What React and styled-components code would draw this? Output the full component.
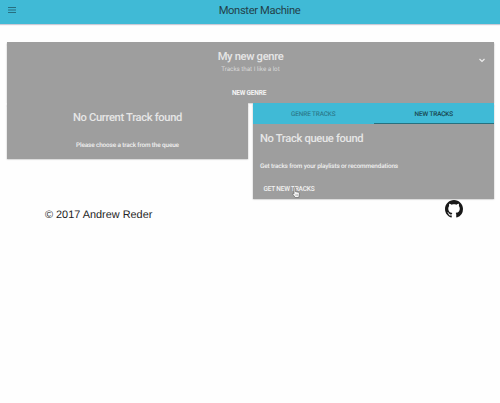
import React from 'react';
import styled, { createGlobalStyle } from 'styled-components';

const GlobalStyle = createGlobalStyle`
  * { box-sizing: border-box; }
  body {
    margin: 0;
    background: #fefefe;
    font-family: Roboto, "Liberation Sans", sans-serif;
    text-rendering: geometricPrecision;
    overflow: hidden;
  }
`;

const Page = styled.div`
  width: 500px;
  height: 403px;
`;

const AppBar = styled.header`
  display: grid;
  grid-template-columns: 24px 1fr 24px;
  height: 24px;
  background: #40bad6;
  box-shadow: 0 1px 1px rgba(70, 70, 110, 0.28);
`;

const MenuIcon = styled.svg`
  width: 8px;
  height: 6px;
  margin: 7px 0 0 8px;
`;

const AppTitle = styled.h1`
  margin: 0 0 0 19px;
  justify-self: center;
  font-size: 11.2px;
  font-weight: 400;
  line-height: 21px;
  letter-spacing: -0.35px;
  color: #23424b;
  white-space: nowrap;
`;

const Main = styled.main`
  padding: 18px 6px 0 7px;
`;

const Card = styled.section`
  background: #9e9e9e;
  color: #e9e9e9;
  box-shadow: 0 0.5px 1.5px rgba(0, 0, 0, 0.35);
`;

const GenreCard = styled(Card)`
  position: relative;
  display: flex;
  flex-direction: column;
  align-items: center;
  height: 61px;
  padding-top: 8px;
`;

const Heading = styled.h2`
  margin: 0;
  font-size: 11.2px;
  font-weight: 500;
  line-height: 14px;
  letter-spacing: -0.34px;
  color: #e6e6e6;
  white-space: nowrap;
`;

const Subtitle = styled.p`
  margin: 0;
  font-size: 6.3px;
  line-height: 11px;
  letter-spacing: -0.04px;
  color: #d8d8d8;
`;

const Text = styled.p`
  margin: 0;
  font-size: 6.4px;
  font-weight: 500;
  line-height: 9px;
  letter-spacing: -0.14px;
  color: #f0f0f0;
  white-space: nowrap;
`;

const FlatButton = styled.button`
  display: block;
  margin: 0;
  padding: 0;
  border: 0;
  background: none;
  color: #f2f2f2;
  font-family: inherit;
  font-size: 6.5px;
  font-weight: ${(p) => p.$weight || 500};
  line-height: 9px;
  letter-spacing: -0.2px;
  text-transform: uppercase;
  white-space: nowrap;
`;

const NewGenre = styled(FlatButton)`
  margin: 14px 3px 0 0;
`;

const ChevronIcon = styled.svg`
  position: absolute;
  top: 16px;
  right: 9px;
  width: 6px;
  height: 5px;
`;

const Columns = styled.div`
  display: grid;
  grid-template-columns: 241px 241px;
  justify-content: space-between;
  align-items: start;
`;

const CurrentTrack = styled(Card)`
  display: flex;
  flex-direction: column;
  align-items: center;
  gap: 16px;
  height: 56px;
  padding-top: 8px;
  clip-path: inset(0 -3px -3px -3px);
`;

const Queue = styled(Card)`
  height: 96px;
  clip-path: inset(0 -3px -3px -3px);
`;

const Tabs = styled.div`
  display: grid;
  grid-template-columns: 1fr 1fr;
  height: 21px;
  background: #40bad6;
`;

const Tab = styled.div`
  border-bottom: 1px solid ${(p) => (p.$active ? '#26707f' : 'transparent')};
  color: ${(p) => (p.$active ? '#173f49' : '#2b7788')};
  font-size: 6.4px;
  font-weight: 400;
  letter-spacing: -0.08px;
  -webkit-text-stroke: ${(p) => (p.$active ? '0.15px' : '0.1px')} currentColor;
  line-height: 22px;
  height: 21px;
  text-align: center;
`;

const QueueBody = styled.div`
  position: relative;
  display: flex;
  flex-direction: column;
  align-items: flex-start;
  padding: 8px 7px;
`;

const QueueText = styled(Text)`
  margin-top: 16px;
`;

const GetTracks = styled(FlatButton)`
  margin: 14px 0 0 3.5px;
`;

const Cursor = styled.svg`
  position: absolute;
  left: 39px;
  top: 62px;
  width: 8px;
  height: 13px;
`;

const Footer = styled.footer`
  display: flex;
  justify-content: space-between;
  padding: 0 37px 0 45px;
`;

const Copyright = styled.p`
  margin: 9px 0 0;
  font-family: "Liberation Sans", Arial, sans-serif;
  font-size: 10.9px;
  line-height: 14px;
  color: #242424;
  white-space: nowrap;
`;

const GithubIcon = styled.svg`
  width: 18px;
  height: 18px;
  margin-top: 0.5px;
`;

export default function App() {
  return (
    <Page>
      <GlobalStyle />
      <AppBar>
        <MenuIcon viewBox="0 0 8 6">
          <path d="M0 0h8v1H0zM0 2.5h8v1H0zM0 5h8v1H0z" fill="#276f80" />
        </MenuIcon>
        <AppTitle>Monster Machine</AppTitle>
      </AppBar>
      <Main>
        <GenreCard>
          <Heading>My new genre</Heading>
          <Subtitle>Tracks that I like a lot</Subtitle>
          <NewGenre $weight={700}>New genre</NewGenre>
          <ChevronIcon viewBox="0 0 6 5">
            <path d="M0.5 1L3 3.4L5.5 1" fill="none" stroke="#ececec" strokeWidth="1.2" />
          </ChevronIcon>
        </GenreCard>
        <Columns>
          <CurrentTrack>
            <Heading>No Current Track found</Heading>
            <Text>Please choose a track from the queue</Text>
          </CurrentTrack>
          <Queue>
            <Tabs>
              <Tab>GENRE TRACKS</Tab>
              <Tab $active>NEW TRACKS</Tab>
            </Tabs>
            <QueueBody>
              <Heading>No Track queue found</Heading>
              <QueueText>Get tracks from your playlists or recommendations</QueueText>
              <GetTracks>Get new tracks</GetTracks>
              <Cursor viewBox="0 0 8 13">
                <path
                  d="M2 1.5q.8-.8 1.4 0v4l3.2.8q1 .5.8 1.6l-.6 3.6H3.2L.7 8.2q-.2-1 .6-.9l.7.5z"
                  fill="#f4f4f4"
                  stroke="#666"
                  strokeWidth=".7"
                />
                <path d="M4 8v2M5.3 8v2" stroke="#888" strokeWidth=".5" />
              </Cursor>
            </QueueBody>
          </Queue>
        </Columns>
      </Main>
      <Footer>
        <Copyright>© 2017 Andrew Reder</Copyright>
        <GithubIcon viewBox="0 0 16 16">
          <path
            fill="#181818"
            d="M8 0C3.58 0 0 3.58 0 8c0 3.54 2.29 6.53 5.47 7.59.4.07.55-.17.55-.38 0-.19-.01-.82-.01-1.49-2.01.37-2.53-.49-2.69-.94-.09-.23-.48-.94-.82-1.13-.28-.15-.68-.52-.01-.53.63-.01 1.08.58 1.23.82.72 1.21 1.87.87 2.33.66.07-.52.28-.87.51-1.07-1.78-.2-3.64-.89-3.64-3.95 0-.87.31-1.59.82-2.15-.08-.2-.36-1.02.08-2.12 0 0 .67-.21 2.2.82.64-.18 1.32-.27 2-.27s1.36.09 2 .27c1.53-1.04 2.2-.82 2.2-.82.44 1.1.16 1.92.08 2.12.51.56.82 1.27.82 2.15 0 3.07-1.87 3.75-3.65 3.95.29.25.54.73.54 1.48 0 1.07-.01 1.93-.01 2.2 0 .21.15.46.55.38A8.01 8.01 0 0 0 16 8c0-4.42-3.58-8-8-8z"
          />
        </GithubIcon>
      </Footer>
    </Page>
  );
}
